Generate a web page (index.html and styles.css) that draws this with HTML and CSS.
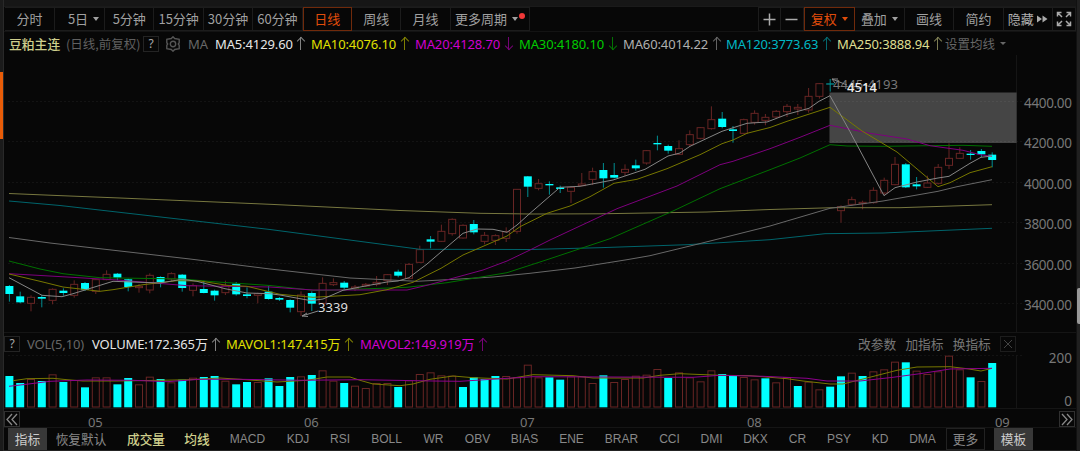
FILE: index.html
```html
<!DOCTYPE html>
<html lang="zh-CN">
<head>
<meta charset="utf-8">
<title>豆粕主连</title>
<link rel="stylesheet" href="styles.css">
</head>
<body>
<div class="app">
  <aside class="rail"><i class="rail-mark"></i></aside>
  <main class="main">
    <div class="strip"></div>
    <nav class="toolbar">
      <span class="tb w50">分时</span>
      <span class="tb w50 five">5日<i class="caret"></i></span>
      <span class="tb w49">5分钟</span>
      <span class="tb w49">15分钟</span>
      <span class="tb w49">30分钟</span>
      <span class="tb w49">60分钟</span>
      <span class="tb w49 on">日线</span>
      <span class="tb w49">周线</span>
      <span class="tb w49">月线</span>
      <span class="tb w80">更多周期<i class="caret"></i><i class="dot"></i></span>
      <span class="grow"></span>
      <span class="tb w23 first"><svg width="13" height="13" viewBox="0 0 13 13"><path d="M6.500 0.500v12M0.500 6.500h12" class="ic"/></svg></span>
      <span class="tb w23"><svg width="13" height="13" viewBox="0 0 13 13"><path d="M0.500 6.500h12" class="ic"/></svg></span>
      <span class="tb w51 on">复权<i class="caret"></i></span>
      <span class="tb w50">叠加<i class="caret"></i></span>
      <span class="tb w49">画线</span>
      <span class="tb w49">简约</span>
      <span class="tb w49 hide">隐藏<svg width="11" height="8" viewBox="0 0 11 8"><path d="M0 0.500L5 4L0 7.500ZM5.500 0.500L10.500 4L5.500 7.500Z" class="fill"/></svg></span>
      <span class="tb w23"><svg width="16" height="16" viewBox="0 0 16 16"><path d="M1.500 5.500v-4h4M1.500 1.500l4.500 4.500M10.500 1.500h4v4M14.500 1.500L10 6M1.500 10.500v4h4M1.500 14.500L6 10M10.500 14.500h4v-4M14.500 14.500L10 10" class="ic"/></svg></span>
    </nav>
    <div class="legend">
      <b class="name">豆粕主连</b><span class="sub">(日线,前复权)</span><span class="q">?</span>
      <svg class="gear" width="16" height="16" viewBox="0 0 16 16"><path d="M8 0.800l1.700 1.700 4.500 0.900v3.300l-0.900 1.300 0.900 1.300v3.300l-4.500 0.900L8 15.200l-1.700-1.700-4.500-0.900V9.300L2.700 8l-0.900-1.300V3.400l4.500-0.900Z"/><circle cx="8" cy="8" r="2.700"/></svg>
      <span class="ma m0">MA</span>
      <span class="ma m5">MA5:4129.60<i class="up"></i></span>
      <span class="ma m10">MA10:4076.10<i class="up"></i></span>
      <span class="ma m20">MA20:4128.70<i class="down"></i></span>
      <span class="ma m30">MA30:4180.10<i class="down"></i></span>
      <span class="ma m60">MA60:4014.22<i class="up"></i></span>
      <span class="ma m120">MA120:3773.63<i class="up"></i></span>
      <span class="ma m250">MA250:3888.94<i class="up"></i></span>
      <span class="setting">设置均线<i class="caret"></i></span>
    </div>
    <svg class="price" id="price" width="1072" height="277" viewBox="4 55 1072 277"></svg>
    <div class="vol-head">
      <span class="q">?</span><span class="ma vlabel">VOL(5,10)</span>
      <span class="ma v1">VOLUME:172.365万<i class="up"></i></span>
      <span class="ma v2">MAVOL1:147.415万<i class="up"></i></span>
      <span class="ma v3">MAVOL2:149.919万<i class="up"></i></span>
      <span class="grow"></span>
      <span class="act">改参数</span><span class="act">加指标</span><span class="act">换指标</span>
      <span class="close"><svg width="10" height="10" viewBox="0 0 10 10"><path d="M1 1l8 8M9 1l-8 8"/></svg></span>
    </div>
    <svg class="volume" id="volume" width="1072" height="53" viewBox="4 355 1072 53"></svg>
    <div class="dates">
      <span class="jump"><svg width="12" height="13" viewBox="0 0 12 13"><path d="M6 1L1 6.500L6 12M11 1L6 6.500L11 12"/></svg></span>
      <span class="mon d5">05</span><span class="mon d6">06</span><span class="mon d7">07</span><span class="mon d8">08</span><span class="mon d9">09</span>
      <span class="jump right"><svg width="12" height="13" viewBox="0 0 12 13"><path d="M1 1L6 6.500L1 12M6 1L11 6.500L6 12"/></svg></span>
    </div>
    <nav class="tabs" id="tabs"></nav>
  </main>
  <aside class="edge"><i></i></aside>
</div>
<script src="chart.js"></script>
</body>
</html>
```
FILE: styles.css
```css
* { box-sizing: border-box; }
body { margin: 0; background: #070707; overflow: hidden; font-family: "Noto Sans", "Noto Sans CJK SC", sans-serif; color: #a0a0a0; }
i { font-style: normal; }
.app { display: flex; width: 1080px; height: 451px; }
.rail { width: 4px; background: #1b1b1b; border-right: 1px solid #292929; padding-top: 72px; }
.rail-mark { display: block; width: 3px; height: 67px; background: #e85c08; }
.main { width: 1072px; display: flex; flex-direction: column; }
.edge { width: 4px; background: #202020; border-left: 1px solid #111; padding-top: 288px; }
.edge i { display: block; height: 36px; background: #999; border-radius: 2px 0 0 2px; }
.strip { height: 7px; background: #161616; border-bottom: 1px solid #1a1a1a; }
.toolbar { height: 25px; display: flex; padding-left: 1px; border-bottom: 1px solid #131313; font-family: "Noto Sans CJK SC", sans-serif; font-size: 13px; }
.tb { height: 24px; flex: none; display: flex; align-items: center; justify-content: center; border: 1px solid #1c1c1c; border-left-width: 0; white-space: nowrap; line-height: 22px; letter-spacing: -0.050px; }
.tb.first { border-left-width: 1px; }
.tb.on { color: #e04d0b; border: 1px solid #702a0b; }
.w23 { width: 23px; } .w49 { width: 49.400px; } .w50 { width: 50px; } .w51 { width: 51px; } .w80 { width: 79.500px; }
.grow { flex: 1; }
.caret { border: 4px solid transparent; border-top-color: currentColor; border-bottom: 0; border-left-width: 3.500px; border-right-width: 3.500px; margin-left: 5px; }
.five { padding-left: 8px; }
.dot { width: 6px; height: 6px; border-radius: 50%; background: #f03838; margin: -7px 0 0 1px; }
.hide svg { margin-left: 3px; }
.hide { color: #b0b0b0; }
.ic { fill: none; stroke: #aaa; stroke-width: 1.500; }
.fill { fill: #aaa; }
.legend { height: 23px; display: flex; align-items: center; padding-left: 5px; white-space: nowrap; }
.name { width: 57px; font: 500 12.800px/20px "Noto Sans CJK SC", sans-serif; color: #cfcf8c; }
.sub { width: 77px; font: 12.500px/20px "Noto Sans CJK SC", sans-serif; color: #606060; }
.q { width: 16px; height: 16px; border: 1px solid #242424; font-size: 12px; line-height: 14px; text-align: center; color: #aaa; }
.gear { margin: 0 0 0 6px; fill: none; stroke: #555; stroke-width: 1.400; }
.ma { flex: none; display: flex; align-items: center; font-size: 13px; line-height: 20px; letter-spacing: -0.120px; }
.m0 { width: 27px; margin-left: 7px; color: #686868; }
.m5 { width: 96px; color: #e6e6e6; }
.m10 { width: 104px; color: #e0e000; }
.m20 { width: 104px; color: #cf00cf; }
.m30 { width: 104px; color: #00cc00; }
.m60 { width: 103px; color: #b0b0b0; }
.m120 { width: 111px; color: #00b8c4; }
.m250 { width: 108px; color: #dfdf92; }
.up, .down { width: 7px; height: 13px; margin-left: 4.500px; opacity: .55; background: linear-gradient(currentColor, currentColor) center / 1px 100% no-repeat; position: relative; }
.up::before, .down::before { content: ""; position: absolute; left: 1px; top: 1px; width: 5px; height: 5px; border: solid currentColor; border-width: 1px 0 0 1px; transform: rotate(45deg); }
.down::before { top: auto; bottom: 1px; transform: rotate(225deg); }
.setting { display: flex; align-items: center; font: 12.500px/20px "Noto Sans CJK SC", sans-serif; color: #666; }
.setting .caret { border-width: 3px 3px 0; margin-left: 5px; }
.price, .volume { display: block; flex: none; overflow: visible; }
.vol-head { height: 23px; display: flex; align-items: center; padding-right: 60px; white-space: nowrap; border-top: 1px solid #151515; }
.vlabel { width: 65px; margin-left: 7px; color: #666; }
.v1 { width: 134px; color: #e6e6e6; }
.v2 { width: 134px; color: #e0e000; }
.v3 { color: #cf00cf; }
.act { width: 47.300px; font: 12.700px/20px "Noto Sans CJK SC", sans-serif; color: #777; }
.close { width: 16px; height: 16px; border: 1px solid #1d1d1d; display: flex; align-items: center; justify-content: center; }
.close path { stroke: #444; fill: none; }
.dates { height: 20px; display: grid; grid-template-columns: 84px 216px 216px 227px 248px 1fr 17px; border-top: 1px solid #151515; border-bottom: 1px solid #151515; font-size: 13px; line-height: 26px; color: #777; }
.dates .jump { grid-column: 1; grid-row: 1; width: 16px; height: 16px; margin-top: 2px; border: 1px solid #303030; display: flex; align-items: center; justify-content: center; }
.dates .jump.right { grid-column: 7; }
.jump path { fill: none; stroke: #888; stroke-width: 1.300; }
.mon { grid-row: 1; letter-spacing: -0.300px; }
.d5 { grid-column: 2; } .d6 { grid-column: 3; } .d7 { grid-column: 4; } .d8 { grid-column: 5; } .d9 { grid-column: 6; }
.tabs { flex: 1; display: flex; border-bottom: 1px solid #222; padding: 0 0 0 4px; font: 12px/22px "Liberation Sans", "Noto Sans CJK SC", sans-serif; color: #888; }
.tab { flex: none; text-align: center; height: 22px; white-space: nowrap; }
.zh { font-family: "Noto Sans CJK SC", sans-serif; font-size: 12.700px; }
.fillbg { background: #383838; color: #ccc; }
.hot { color: #cfcf8c; font-weight: 500; }
.box { border: 1px solid #222; line-height: 20px; }
.gap { margin-left: 1px; }
.gap2 { margin-left: 9px; }
.tick { font: 13.500px "Noto Sans", sans-serif; fill: #777; }
.grid { stroke: #131313; stroke-dasharray: 2 2; }
.line { fill: none; stroke-width: 1; }
```
FILE: chart.js
```javascript
const X0 = 9.4, STEP = 10.8;
const cx = i => X0 + STEP * i;

// Candles grouped by panel segment: base offset, then [dir, high, bodyTop, bodyBottom, low] in thirds of a pixel.
const segments = [
  [180, `d315,318,342,365 d335,349,367,370 u346,352,370,394 d345,351,356,382 u325,328,361,373 d325,332,339,347 u301,313,346,353 d306,309,329,333 u297,299,334,342 u271,283,299,301 d279,281,293,301 d296,298,321,334 u312,319,322,338 u280,286,330,340 d289,291,306,322 u277,281,297,303 d282,284,324,335 u310,317,331,349 d302,327,339,340 d329,332,346,362 u302,317,338,345 d306,311,343,347 d322,343,348,355 u338,341,346,370 d318,335,357,359 d351,354,359,363 d358,360,383,397 u334,345,395,408 d334,339,371,393 u292,310,370,371 u295,308,314,318 d303,308,323,328 u315,321,325,333 u309,313,318,321 u288,307,313,319 u282,284,302,315 d269,275,287,292 u249,253,295,299 u197,209,247,248 d168,178,185,205 u134,154,184,186 u115,118,161,167 u133,136,174,176 d120,132,157,163 u156,166,184,193 u163,167,181,195 u142,155,175,186 u27,28,154,161`],
  [70, `d318,319,350,381 u327,341,355,361 d334,342,346,374 d347,352,357,369 u349,352,364,399 u309,342,347,348 u293,305,328,345 d279,300,325,353 d279,315,323,325 u283,298,307,318 d269,286,295,302 u240,242,279,284 d197,219,223,241 d224,228,242,251 u211,236,253,255 u181,194,224,230 u171,173,205,208 u109,149,176,179 d126,146,171,175 d168,178,183,218 u146,149,190,191 u121,130,157,164`],
  [60, `u162,172,181,196 u150,154,171,176 u132,139,155,171 u132,142,147,165 u84,109,150,158 u69,71,109,116 d57,70,73,95 u436,440,452,488 u410,419,433,438 u422,427,431,448 u382,391,428,431 u353,361,399,405 u291,313,374,376 d309,313,382,384 d351,373,379,388 u347,369,382,384 u312,322,370,374 u250,295,316,327 u262,280,295,297 d270,281,285,299 d267,273,283,291 d277,284,300,322`]
];
const candles = segments.flatMap(([base, s]) => s.split(' ').map(t => [t[0], ...t.slice(1).split(',').map(v => base + v / 3)]));

const lines = [
  ['#77773f', '9,193.5 57,195.5 120,198 270,204.3 400,210.5 480,213.3 530,214 600,213.8 707,212 770,209.5 833,207.7 900,207.7 992,204.7'],
  ['#00646b', '9,201 60,205.5 270,229.5 420,249.3 530,249.5 600,247.7 687,244.7 770,239.7 825,233.7 883,233 992,228.3'],
  ['#686868', '9,237.5 50,243 120,251 190,259 270,269 350,278 417,281.3 460,279 493,277 530,273.3 575,268 627,259.7 650,255.7 697,244.3 750,231 770,226 830,208.3 883,201 938,191.3 957,186.7 992,179.7'],
  ['#007000', '9,261 40,269 63,273.7 100,277.7 183,279 213,281.7 270,285.5 313,290.3 327,290.3 407,287.3 447,282.7 507,272.7 547,259.7 610,238.7 673,211 720,188.7 770,169.7 800,158 830,144.7 847,146 883,146.3 963,145.3 992,146.3'],
  ['#7d007d', '9,273.7 67,277 117,280 167,284 187,285.7 270,287 313,290 407,290 427,285.3 483,270 507,261 530,250 550,240 617,208.7 677,186 720,164.7 733,161.3 770,148.7 800,137.3 830,125.3 870,133.3 907,139 930,145.7 963,150.3 980,154.7 992,156.3'],
  ['#777700', '9,274 40,281.3 63,287 100,291.3 113,289.7 143,284.7 177,280.7 200,281 227,285.3 247,286.3 280,294.3 313,297.3 360,294.7 387,289.7 413,282.3 441,268.3 463,255 507,236 520,226.7 547,213.3 570,206 590,196.7 614,183.3 637,179.3 667,168.7 700,154.7 722,143.7 733,140 747,133.3 770,127.5 787,121.3 830,107.3 862,131 897,152 938,186.7 950,182.7 970,172.7 992,166.7'],
  ['#858585', '9,277.7 42,295.3 62,296.7 73,293.7 113,281.3 160,283 182,279.3 197,281.3 225,288.7 247,293 270,293.7 280,295 311,300.7 323,299 343,290.3 367,285.7 387,282 398,281 409,277.7 427,264 441,252 463,233.3 477,229 493,229.3 507,232.3 517,225 530,213.3 560,187.3 580,186.3 613,180 645,169.3 668,156 680,153 690,146.3 722,131.3 747,123.3 767,122 787,114.3 809,108.3 819,101.3 830,95.7 850,131.7 884,195.7 895,187.7 917,182 938,178 949,176.3 970,163.3 981,157.3 992,156']
];

let s = '';
for (let k = 0; k < 6; k++) {
  const y = 101.5 + Math.round(k * 40.45);
  s += `<path class="grid" d="M8 ${y}H1022"/><text class="tick" x="1024" y="${108 + k * 40.45}" textLength="48">${4400 - 200 * k}.00</text>`;
}
s += '<path d="M1016.5 55V332" stroke="#151515"/>';
candles.forEach(([d, h, t, b, l], i) => {
  const x = cx(i), H = Math.max(b - t, 1.3);
  s += d === 'd'
    ? `<path d="M${x} ${h}V${l}" stroke="#008e92"/><rect x="${x - 4}" y="${t}" width="8" height="${H}" fill="${i === 76 ? '#008e92' : '#00ffff'}"/>`
    : `<path d="M${x} ${h}V${t}M${x} ${b}V${l}" stroke="#682524"/><rect x="${x - 3.5}" y="${t}" width="7" height="${H}" fill="none" stroke="#682524"/>`;
});
s += '<rect x="829.5" y="92.5" width="187" height="50.5" fill="#fff" fill-opacity="0.25"/>';
lines.forEach(([c, p]) => s += `<polyline class="line" stroke="${c}" points="${p}"/>`);
s += `<g font-family="Noto Sans" font-size="13"><text x="833" y="88.5" fill="#777" textLength="65">4445-4193</text><text x="847" y="91.5" fill="#eee" font-weight="500" textLength="30">4514</text><text x="318" y="311.5" fill="#ddd" textLength="30">3339</text></g>`;
s += '<path d="M302 316l16-5M302 316l5-3M302 316l6 0.5M832 79l15 6M832 79l6 0M832 79l3 4" stroke="#888" fill="none"/>';
document.getElementById('price').innerHTML = s;

const vols = 'd153 d174 u162 d168 u148 d171 u165 d187 u157 u157 d178 d159 u178 u155 d162 u172 d164 u158 d156 d153 u167 d178 d171 u171 d160 d183 d156 u154 d150 u136 u167 d174 u182 u189 u174 u174 d186 u166 u147 u142 u151 u152 d186 d157 d162 d153 u153 u157 u119 u157 d157 d164 u154 u154 u174 d151 u171 u162 u152 u149 u132 d159 u142 u157 u169 u136 d147 d151 u156 u163 d160 u172 u156 d183 u170 u193 d185 d154 u143 d153 u139 u133 u110 d112 u137 u147 u139 u92 u133 d157 u168 d114';
let v = '<path class="grid" d="M8 355.5H1022"/><path d="M1016.5 355V408" stroke="#151515"/><text class="tick" x="1072" y="362.5" text-anchor="end">200</text><text class="tick" x="1072" y="406" text-anchor="end">0</text>';
vols.split(' ').forEach((t, i) => {
  const x = cx(i), y = 325 + t.slice(1) / 3;
  v += t[0] === 'd'
    ? `<rect x="${x - 4}" y="${y}" width="8" height="${407.3 - y}" fill="#00ffff"/>`
    : `<rect x="${x - 3.5}" y="${y + .5}" width="7" height="${406.5 - y}" fill="none" stroke="#682524"/>`;
});
v += '<polyline class="line" stroke="#777700" points="13,380.7 27,378.7 53,378.3 67,379.7 83,381 117,381 160,380.3 190,379.7 220,378 240,379.3 277,382 307,380.3 327,377 350,377 360,380.3 373,384 400,385.7 413,384 430,379.3 453,376 473,377.7 507,379 533,374.7 573,375.7 593,378 643,378 660,375.3 680,373.7 720,375.3 750,375.7 787,378.7 803,381 830,384 843,384 863,379 897,370.3 917,367 950,366.7 967,368.7 981,371 992,368.3"/>';
v += '<polyline class="line" stroke="#8d008d" points="9,386.3 23,384.7 50,381.3 87,380 133,380.3 167,381.7 200,379.3 240,379.3 300,380.3 360,379.7 433,381 460,381.3 507,378.3 533,376.7 613,377 693,377.3 720,375.3 763,376.3 807,378.3 827,381 860,381 893,377.3 920,373.7 950,369 992,368.3"/>';
document.getElementById('volume').innerHTML = v;

// [label, width, extra classes]
const tabs = [['指标',39,'zh fillbg'],['恢复默认',68,'zh'],['成交量',62,'zh hot'],['均线',40,'zh hot'],['MACD',61],['KDJ',40],['RSI',44],['BOLL',49],['WR',45],['OBV',43],['BIAS',51],['ENE',43],['BRAR',57],['CCI',39],['DMI',45],['DKX',43],['CR',41],['PSY',42],['KD',40],['DMA',45],['更多',39,'zh box gap'],['模板',39,'zh fillbg gap2']];
document.getElementById('tabs').innerHTML = tabs.map(([t, w, c = '']) => `<span class="tab ${c}" style="width:${w}px">${t}</span>`).join('');
```
